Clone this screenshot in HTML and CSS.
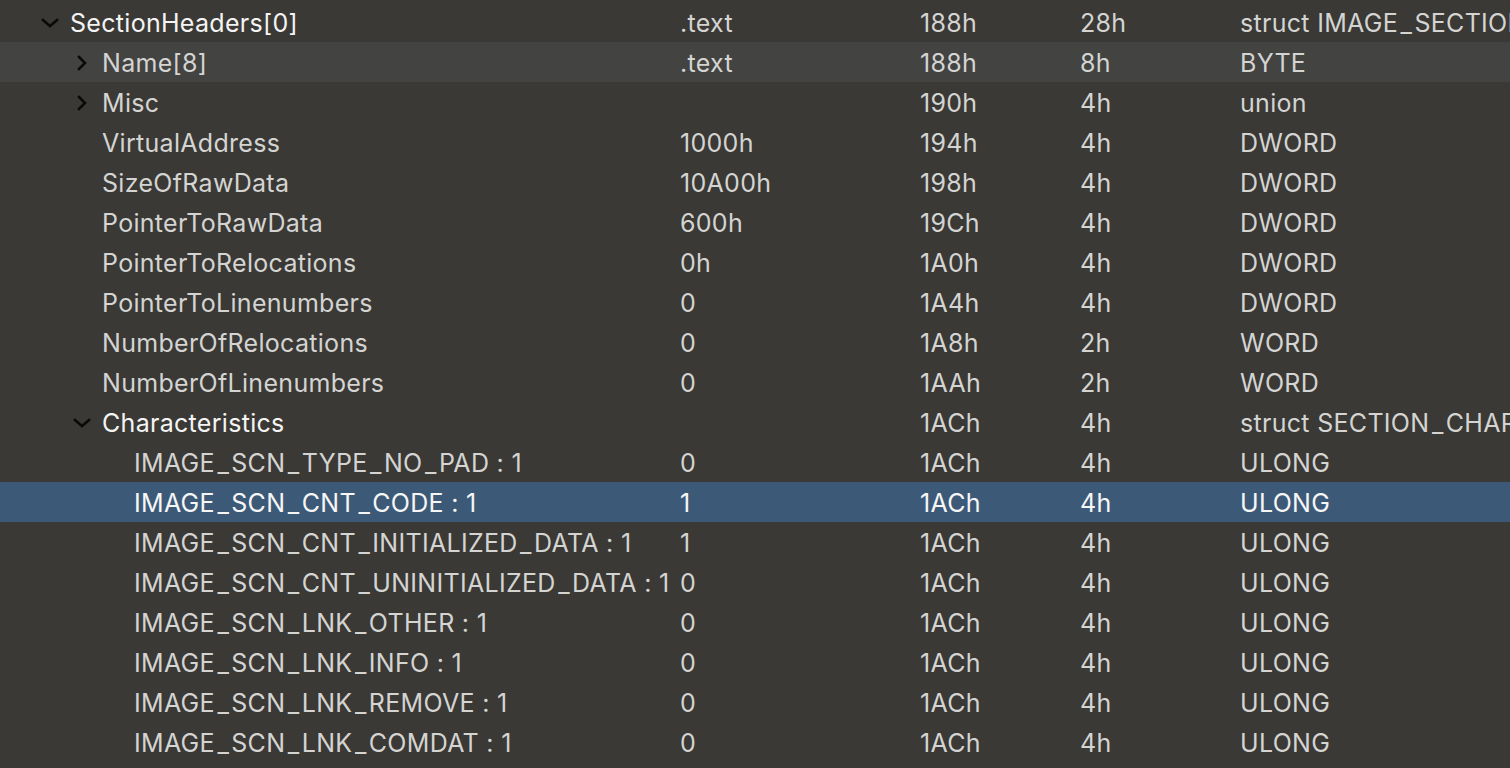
FILE: index.html
```html
<!DOCTYPE html>
<html>
<head>
<meta charset="utf-8">
<link rel="stylesheet" href="styles.css">
</head>
<body>
<div class="tree">
  <div class="row"><div class="name l0"><span class="chev down"><svg viewBox="0 0 20 12" width="20" height="12"><path d="M3 3 L10 9 L17 3" /></svg></span><span class="label strong">SectionHeaders[0]</span></div><div class="cell">.text</div><div class="cell">188h</div><div class="cell">28h</div><div class="cell">struct IMAGE<span class="u">_</span>SECTION<span class="u">_</span>HEADER</div></div>
  <div class="row hover"><div class="name l1"><span class="chev right"><svg viewBox="0 0 20 16" width="20" height="16"><path d="M7 2 L13 8 L7 14" /></svg></span><span class="label">Name[8]</span></div><div class="cell">.text</div><div class="cell">188h</div><div class="cell">8h</div><div class="cell">BYTE</div></div>
  <div class="row"><div class="name l1"><span class="chev right"><svg viewBox="0 0 20 16" width="20" height="16"><path d="M7 2 L13 8 L7 14" /></svg></span><span class="label">Misc</span></div><div class="cell"></div><div class="cell">190h</div><div class="cell">4h</div><div class="cell">union</div></div>
  <div class="row"><div class="name l1"><span class="chev"></span><span class="label">VirtualAddress</span></div><div class="cell">1000h</div><div class="cell">194h</div><div class="cell">4h</div><div class="cell">DWORD</div></div>
  <div class="row"><div class="name l1"><span class="chev"></span><span class="label">SizeOfRawData</span></div><div class="cell">10A00h</div><div class="cell">198h</div><div class="cell">4h</div><div class="cell">DWORD</div></div>
  <div class="row"><div class="name l1"><span class="chev"></span><span class="label">PointerToRawData</span></div><div class="cell">600h</div><div class="cell">19Ch</div><div class="cell">4h</div><div class="cell">DWORD</div></div>
  <div class="row"><div class="name l1"><span class="chev"></span><span class="label">PointerToRelocations</span></div><div class="cell">0h</div><div class="cell">1A0h</div><div class="cell">4h</div><div class="cell">DWORD</div></div>
  <div class="row"><div class="name l1"><span class="chev"></span><span class="label">PointerToLinenumbers</span></div><div class="cell">0</div><div class="cell">1A4h</div><div class="cell">4h</div><div class="cell">DWORD</div></div>
  <div class="row"><div class="name l1"><span class="chev"></span><span class="label">NumberOfRelocations</span></div><div class="cell">0</div><div class="cell">1A8h</div><div class="cell">2h</div><div class="cell">WORD</div></div>
  <div class="row"><div class="name l1"><span class="chev"></span><span class="label">NumberOfLinenumbers</span></div><div class="cell">0</div><div class="cell">1AAh</div><div class="cell">2h</div><div class="cell">WORD</div></div>
  <div class="row"><div class="name l1"><span class="chev down"><svg viewBox="0 0 20 12" width="20" height="12"><path d="M3 3 L10 9 L17 3" /></svg></span><span class="label strong">Characteristics</span></div><div class="cell"></div><div class="cell">1ACh</div><div class="cell">4h</div><div class="cell">struct SECTION<span class="u">_</span>CHARACTERISTICS</div></div>
  <div class="row"><div class="name l2"><span class="chev"></span><span class="label">IMAGE<span class="u">_</span>SCN<span class="u">_</span>TYPE<span class="u">_</span>NO<span class="u">_</span>PAD : 1</span></div><div class="cell">0</div><div class="cell">1ACh</div><div class="cell">4h</div><div class="cell">ULONG</div></div>
  <div class="row selected"><div class="name l2"><span class="chev"></span><span class="label">IMAGE<span class="u">_</span>SCN<span class="u">_</span>CNT<span class="u">_</span>CODE : 1</span></div><div class="cell">1</div><div class="cell">1ACh</div><div class="cell">4h</div><div class="cell">ULONG</div></div>
  <div class="row"><div class="name l2"><span class="chev"></span><span class="label">IMAGE<span class="u">_</span>SCN<span class="u">_</span>CNT<span class="u">_</span>INITIALIZED<span class="u">_</span>DATA : 1</span></div><div class="cell">1</div><div class="cell">1ACh</div><div class="cell">4h</div><div class="cell">ULONG</div></div>
  <div class="row"><div class="name l2"><span class="chev"></span><span class="label">IMAGE<span class="u">_</span>SCN<span class="u">_</span>CNT<span class="u">_</span>UNINITIALIZED<span class="u">_</span>DATA : 1</span></div><div class="cell">0</div><div class="cell">1ACh</div><div class="cell">4h</div><div class="cell">ULONG</div></div>
  <div class="row"><div class="name l2"><span class="chev"></span><span class="label">IMAGE<span class="u">_</span>SCN<span class="u">_</span>LNK<span class="u">_</span>OTHER : 1</span></div><div class="cell">0</div><div class="cell">1ACh</div><div class="cell">4h</div><div class="cell">ULONG</div></div>
  <div class="row"><div class="name l2"><span class="chev"></span><span class="label">IMAGE<span class="u">_</span>SCN<span class="u">_</span>LNK<span class="u">_</span>INFO : 1</span></div><div class="cell">0</div><div class="cell">1ACh</div><div class="cell">4h</div><div class="cell">ULONG</div></div>
  <div class="row"><div class="name l2"><span class="chev"></span><span class="label">IMAGE<span class="u">_</span>SCN<span class="u">_</span>LNK<span class="u">_</span>REMOVE : 1</span></div><div class="cell">0</div><div class="cell">1ACh</div><div class="cell">4h</div><div class="cell">ULONG</div></div>
  <div class="row"><div class="name l2"><span class="chev"></span><span class="label">IMAGE<span class="u">_</span>SCN<span class="u">_</span>LNK<span class="u">_</span>COMDAT : 1</span></div><div class="cell">0</div><div class="cell">1ACh</div><div class="cell">4h</div><div class="cell">ULONG</div></div>
</div>
</body>
</html>
```
FILE: styles.css
```css
html, body {
  margin: 0;
  padding: 0;
  background: #3a3935;
  overflow: hidden;
}
body {
  width: 1510px;
  height: 768px;
  font-family: Inter, "Noto Sans", sans-serif;
  font-size: 25px;
  letter-spacing: 0.3px;
  color: #d4d4d2;
}
.tree {
  padding-top: 2px;
}
.row {
  display: grid;
  grid-template-columns: 680px 240px 160px 160px 1fr;
  height: 40px;
  align-items: center;
  white-space: nowrap;
  overflow: hidden;
}
.row > div {
  padding-top: 2px;
}
.row.hover {
  background: #434342;
}
.row.selected {
  background: #3c5a78;
  color: #f6f6f6;
}
.name {
  display: flex;
  align-items: center;
  overflow: hidden;
}
.name.l0 { padding-left: 40px; }
.name.l1 { padding-left: 72px; }
.name.l2 { padding-left: 104px; }
.chev {
  width: 20px;
  margin-right: 10px;
  display: flex;
  align-items: center;
  justify-content: center;
  flex: none;
}
.chev svg path {
  fill: none;
  stroke: #0a0a0a;
  stroke-width: 2.6;
  stroke-linecap: square;
}
.label {
  overflow: hidden;
}
.label.strong {
  color: #f4f4f4;
}
.u {
  letter-spacing: 2.5px;
  margin-left: 2.5px;
}
.cell {
  overflow: hidden;
}
```
